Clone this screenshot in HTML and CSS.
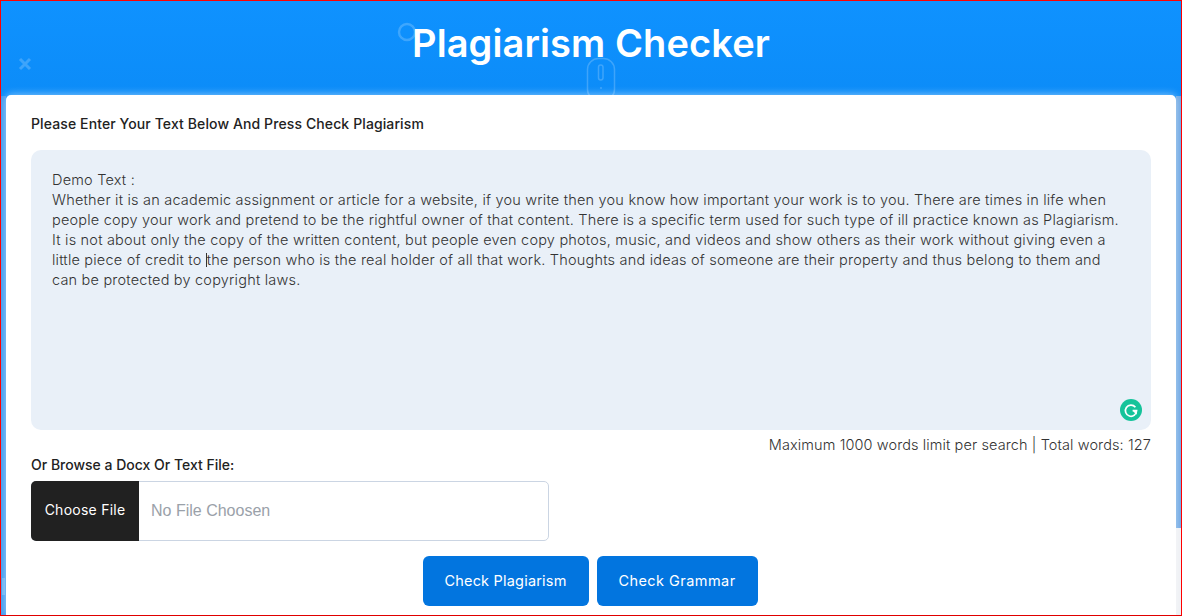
FILE: index.html
```html
<!DOCTYPE html>
<html lang="en">
<head>
<meta charset="utf-8">
<title>Plagiarism Checker</title>
<link rel="stylesheet" href="styles.css">
</head>
<body>
<div class="frame">
  <div class="gutter-left"><div class="gutter-mark"></div></div>
  <div class="gutter-right"><div class="gutter-thumb"></div></div>
  <svg class="deco deco-ring" width="20" height="20" viewBox="0 0 20 20"><circle cx="10" cy="10" r="8" fill="none" stroke="#fff" stroke-width="2.4"/></svg>
  <svg class="deco deco-x" width="14" height="14" viewBox="0 0 14 14"><path d="M2 2L12 12M12 2L2 12" stroke="#fff" stroke-width="3" fill="none"/></svg>
  <svg class="deco deco-mouse" width="30" height="42" viewBox="0 0 30 42"><rect x="1.5" y="1.5" width="27" height="42" rx="11" fill="none" stroke="#fff" stroke-width="1.5"/><rect x="12.5" y="8" width="4.5" height="15" rx="2.2" fill="none" stroke="#fff" stroke-width="1.5"/><circle cx="15" cy="31" r="1" fill="#fff"/></svg>
  <header class="hero"><h1 class="title">Plagiarism Checker</h1></header>
  <main class="card">
    <label class="label label-top">Please Enter Your Text Below And Press Check Plagiarism</label>
    <div class="editor">
      <div class="editor-text">Demo Text :<br>Whether it is an academic assignment or article for a website, if you write then you know how important your work is to you. There are times in life when<br>people copy your work and pretend to be the rightful owner of that content. There is a specific term used for such type of ill practice known as Plagiarism.<br>It is not about only the copy of the written content, but people even copy photos, music, and videos and show others as their work without giving even a<br>little piece of credit to <span class="caret"></span>the person who is the real holder of all that work. Thoughts and ideas of someone are their property and thus belong to them and<br>can be protected by copyright laws.</div>
      <svg class="grammarly" width="22" height="22" viewBox="0 0 22 22"><circle cx="11" cy="11" r="11" fill="#15c39a"/><path d="M15.4 8.2A5.6 5.6 0 1 0 16.6 11.6H12.6" fill="none" stroke="#fff" stroke-width="1.7"/><path d="M13 12.2L16.8 15.8V11.6" fill="#fff"/></svg>
    </div>
    <div class="limit">Maximum 1000 words limit per search | Total words: 127</div>
    <label class="label label-file">Or Browse a Docx Or Text File:</label>
    <div class="file">
      <span class="file-btn">Choose File</span>
      <span class="file-name">No File Choosen</span>
    </div>
    <div class="actions">
      <button class="btn btn-plag">Check Plagiarism</button>
      <button class="btn btn-gram">Check Grammar</button>
    </div>
  </main>
</div>
</body>
</html>
```
FILE: styles.css
```css
* { box-sizing: border-box; }
html, body { margin: 0; padding: 0; background: #fff; }
body { width: 1182px; height: 616px; overflow: hidden; font-family: "Inter", "Liberation Sans", sans-serif; }
.frame {
  position: relative;
  width: 1182px;
  height: 616px;
  border: 1px solid #f00;
  border-bottom-color: #e00000;
  background: linear-gradient(#0f92ff, #0c8cf8 95px);
  overflow: hidden;
  display: flex;
  flex-direction: column;
  padding: 0 5px;
}
.gutter-left { position: absolute; left: 0; top: 95px; bottom: 0; width: 5px; background: #3f9bf0; }
.gutter-mark { position: absolute; left: 1px; bottom: 20px; width: 3px; height: 17px; background: rgba(255,255,255,.2); }
.gutter-right { position: absolute; right: 0; top: 95px; bottom: 0; width: 5px; background: #eef0f4; }
.gutter-thumb { height: 432px; background: #6ea8e4; }
.deco { position: absolute; opacity: .2; }
.deco-ring { left: 396px; top: 21px; }
.deco-x { left: 17px; top: 56px; }
.deco-mouse { left: 585px; top: 56px; }
.hero { height: 94px; flex: none; display: flex; justify-content: center; position: relative; }
.title { margin: 20px 0 0; font-size: 38px; line-height: 44px; font-weight: 600; color: #fff; letter-spacing: .1px; }
.card {
  position: relative;
  flex: 1;
  background: #fff;
  border-radius: 5px 5px 0 0;
  box-shadow: 0 0 8px rgba(255,255,255,.55);
  padding: 19px 25px 0 25px;
  display: flex;
  flex-direction: column;
}
.label { font-size: 14px; line-height: 20px; font-weight: 500; color: #222; }
.label-top { margin-bottom: 16px; letter-spacing: .11px; }
.editor { position: relative; height: 280px; background: #e9f0f8; border-radius: 10px; padding: 20px 21px; flex: none; }
.editor-text { font-size: 14.5px; letter-spacing: .2px; line-height: 20px; color: #333; white-space: nowrap; font-weight: 300; }
.caret { display: inline-block; width: 1px; height: 14px; background: #333; vertical-align: -2px; }
.grammarly { position: absolute; right: 9px; bottom: 9px; }
.limit { text-align: right; font-size: 14.5px; letter-spacing: .1px; line-height: 20px; color: #333; margin-top: 5px; font-weight: 300; }
.label-file { margin-bottom: 6px; }
.file { display: flex; width: 518px; height: 60px; border: 1px solid #cbd5e3; border-radius: 5px; flex: none; }
.file-btn { width: 108px; margin: -1px 0 -1px -1px; padding-bottom: 3px; background: #212121; color: #fff; border-radius: 5px 0 0 5px; display: flex; align-items: center; justify-content: center; font-size: 14px; letter-spacing: .25px; font-weight: 400; }
.file-name { font-family: "Liberation Sans", Arial, sans-serif; font-size: 16px; color: #9aa1a9; padding: 0 12px; display: flex; align-items: center; }
.actions { display: flex; justify-content: center; gap: 8px; margin-top: 15px; padding-right: 2px; }
.btn { height: 50px; border: 0; border-radius: 6px; background: #0275df; color: #fff; font-family: inherit; font-size: 14.5px; font-weight: 400; padding: 0 0 2px; }
.btn-plag { width: 166px; letter-spacing: .2px; }
.btn-gram { width: 161px; letter-spacing: .45px; }
```
